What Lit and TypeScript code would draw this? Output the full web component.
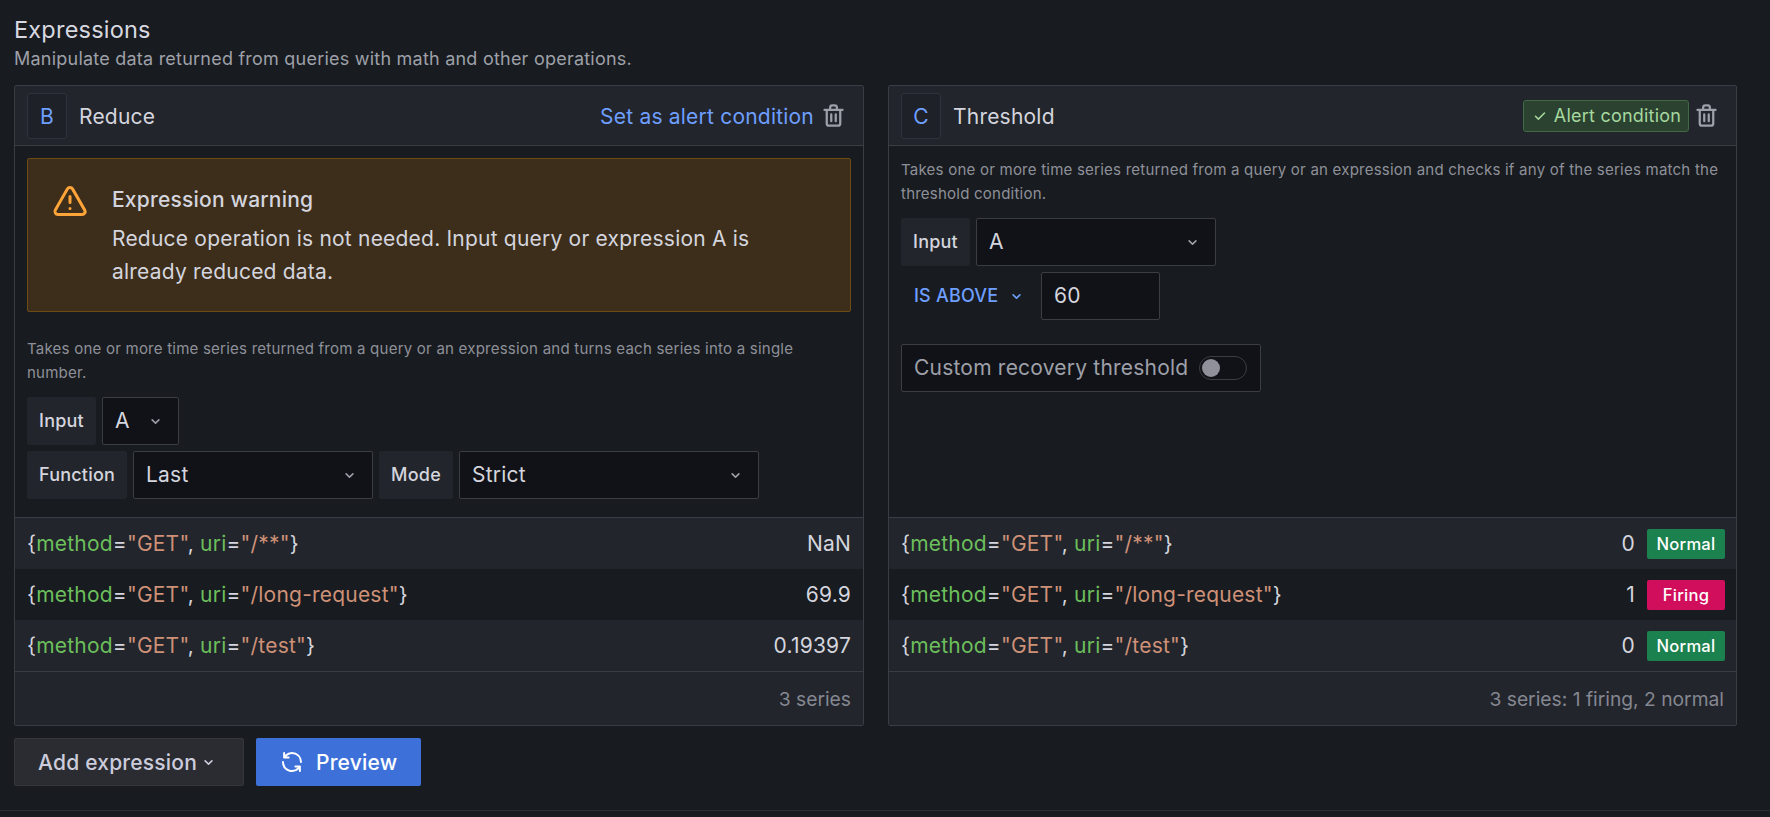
import { LitElement, html, css, svg } from "lit";
import { customElement } from "lit/decorators.js";

const P = {
  trash: "M10,18a1,1,0,0,0,1-1V11a1,1,0,0,0-2,0v6A1,1,0,0,0,10,18ZM20,6H16V5a3,3,0,0,0-3-3H11A3,3,0,0,0,8,5V6H4A1,1,0,0,0,4,8H5V19a3,3,0,0,0,3,3h8a3,3,0,0,0,3-3V8h1a1,1,0,0,0,0-2ZM10,5a1,1,0,0,1,1-1h2a1,1,0,0,1,1,1V6H10Zm7,14a1,1,0,0,1-1,1H8a1,1,0,0,1-1-1V8H17Zm-3-1a1,1,0,0,0,1-1V11a1,1,0,0,0-2,0v6A1,1,0,0,0,14,18Z",
  warn: "M12,16a1,1,0,1,0,1,1A1,1,0,0,0,12,16Zm10.67,1.47-8.05-14a3,3,0,0,0-5.24,0l-8,14A3,3,0,0,0,3.94,22H20.06a3,3,0,0,0,2.61-4.53Zm-1.73,2a1,1,0,0,1-.88.51H3.94a1,1,0,0,1-.88-.51,1,1,0,0,1,0-1l8-14a1,1,0,0,1,1.78,0l8.05,14A1,1,0,0,1,20.94,19.49ZM12,8a1,1,0,0,0-1,1v4a1,1,0,0,0,2,0V9A1,1,0,0,0,12,8Z",
  sync: "M19.91,15.51H15.38a1,1,0,0,0,0,2h2.4A8,8,0,0,1,4,12a1,1,0,0,0-2,0,10,10,0,0,0,16.88,7.23V21a1,1,0,0,0,2,0V16.5A1,1,0,0,0,19.91,15.51ZM12,2A10,10,0,0,0,5.12,4.77V3a1,1,0,0,0-2,0V7.5a1,1,0,0,0,1,1h4.5a1,1,0,0,0,0-2H6.22A8,8,0,0,1,20,12a1,1,0,0,0,2,0A10,10,0,0,0,12,2Z",
  down: "M17,9.17a1,1,0,0,0-1.41,0L12,12.71,8.46,9.17a1,1,0,0,0-1.41,0,1,1,0,0,0,0,1.42l4.24,4.24a1,1,0,0,0,1.42,0L17,10.59A1,1,0,0,0,17,9.17Z",
  check: "M18.71,7.21a1,1,0,0,0-1.42,0L9.84,14.67,6.71,11.53A1,1,0,1,0,5.29,13l3.84,3.84a1,1,0,0,0,1.42,0l8.16-8.16A1,1,0,0,0,18.71,7.21Z",
};
const icon = (name: keyof typeof P, cls = "") =>
  html`<svg class="icon ${cls}" viewBox="0 0 24 24" fill="currentColor">${svg`<path d=${P[name]}></path>`}</svg>`;

const labels = (uri: string) => html`<span>{<span class="k">method</span>=<span class="v">"GET"</span>, <span class="k">uri</span>=<span class="v">"${uri}"</span>}</span>`;

@customElement("app-root")
export class AppRoot extends LitElement {
  static styles = css`
    :host { display: block; height: 817px; background: #181b1f; color: #ccccdc; font-family: Inter, "Noto Sans", sans-serif; font-size: 21px; letter-spacing: .01em; overflow: hidden; box-sizing: border-box; padding: 14px 33px 0 14px; }
    * { box-sizing: border-box; }
    .icon { display: block; flex: none; }
    .title { font-size: 23.5px; line-height: 32px; font-weight: 400; color: #d8d9e0; }
    .sub { font-size: 18px; letter-spacing: .0125em; line-height: 24px; color: #9ea0a9; margin-top: 1px; height: 30px; }
    .grid { display: grid; grid-template-columns: 850px 849px; gap: 24px; margin-top: 8px; }
    .panel { border: 1px solid #3a3d44; border-radius: 2px; display: flex; flex-direction: column; height: 641px; background: #181b1f; }
    .head { height: 60px; flex: none; background: #22252b; border-bottom: 1px solid #3a3d44; display: flex; align-items: center; padding: 0 12px; }
    .ref { width: 40px; height: 46px; border: 1px solid #2f323a; border-radius: 3px; background: #1e2127; color: #6e9fff; display: flex; align-items: center; justify-content: center; padding-top: 1px; }
    .name { margin-left: 12px; color: #d4d5de; flex: 1; padding-top: 2px; }
    .set { color: #6e9fff; margin-right: 1px; padding-top: 2px; }
    .trash { width: 27px; height: 27px; color: #9ea0a9; }
    .head .trash { margin: 0 4px 0 5px; }
    .ok { height: 32px; width: 166px; display: flex; align-items: center; justify-content: center; gap: 5px; background: #2b4231; border: 1px solid #3f6a44; border-radius: 3px; color: #a6d89f; font-size: 18px; letter-spacing: .012em; }
    .ok .icon { width: 18px; height: 18px; }
    .ok ~ .trash { margin-left: 4px; }
    .body { flex: 1; padding: 12px 12px 0; }
    .alert { height: 154px; background: #3d2e1b; border: 1px solid #6c4b15; border-radius: 2px; display: flex; padding: 29px 24px 0 24px; }
    .alert .icon { width: 36px; height: 36px; color: #ffa439; margin-top: -5px; }
    .alert-text { margin-left: 24px; width: 690px; }
    .alert-title { font-weight: 500; line-height: 24px; color: #d4d5de; }
    .alert-msg { line-height: 33px; margin-top: 10px; color: #d4d5de; }
    .desc { font-size: 15.05px; line-height: 24px; color: #8e9099; }
    .desc.first { margin-top: 25px; }
    .row { display: flex; gap: 6px; margin-top: 12px; height: 48px; }
    .row + .row { margin-top: 6px; }
    .lab { height: 48px; display: flex; align-items: center; justify-content: center; background: #22252b; border-radius: 2px; font-size: 18px; font-weight: 500; color: #d4d5de; padding-bottom: 2px; }
    .sel { height: 48px; display: flex; align-items: center; background: #111217; border: 1px solid #3a3d44; border-radius: 2px; padding: 0 13px 2px 12px; color: #d4d5de; justify-content: space-between; }
    .sel .icon { width: 19px; height: 19px; color: #9ea0a9; margin-top: 2px; }
    .op { width: 134px; display: flex; align-items: center; color: #6e9fff; font-size: 18px; font-weight: 500; padding: 0 0 2px 13px; gap: 9px; }
    .op .icon { width: 19px; height: 19px; margin-top: 2px; }
    .rec { margin-top: 24px; width: 360px; height: 48px; background: #111217; border: 1px solid #3a3d44; border-radius: 2px; display: flex; align-items: center; padding: 0 0 2px 12px; color: #9ea0a9; }
    .sw { width: 48px; height: 24px; border: 1px solid #3a3d44; border-radius: 12px; margin: 2px 0 0 11px; padding: 2px 2px; flex: none; }
    .sw i { display: block; width: 18px; height: 18px; border-radius: 50%; background: #8f9099; }
    .tr { height: 51px; display: flex; align-items: center; justify-content: space-between; padding: 0 12px; color: #d4d5de; background: #181b1f; }
    .tbl { border-top: 1px solid #3a3d44; }
    .tr.alt { background: #22252b; }
    .k { color: #6cbf5c; }
    .v { color: #ce9178; }
    .end { display: flex; align-items: center; gap: 12px; }
    .badge { width: 78px; height: 30px; margin-right: -1px; border-radius: 2px; display: flex; align-items: center; justify-content: center; color: #fff; font-size: 16.6px; font-weight: 500; }
    .normal { background: #1b814e; }
    .firing { background: #d10e5c; }
    .foot { height: 54px; flex: none; background: #22252b; border-top: 1px solid #3a3d44; display: flex; align-items: center; justify-content: flex-end; padding: 0 12px; color: #858791; font-size: 19.25px; letter-spacing: 0; }
    .btns { display: flex; gap: 12px; margin-top: 12px; }
    .btn { height: 48px; display: flex; align-items: center; border-radius: 2px; font-weight: 500; }
    .add { width: 230px; background: #2a2c32; border: 1px solid #35373d; color: #ccccdc; padding-left: 23px; gap: 2px; }
    .add .icon { width: 19px; height: 19px; }
    .prev { width: 165px; background: #3d71d9; color: #fff; padding-left: 24px; gap: 12px; }
    .prev .icon { width: 24px; height: 24px; }
    .rule { border-top: 1px solid #2c2f36; margin: 24px -33px 0 -14px; }
  `;

  private table(rows: [string, string, string?][], foot: string) {
    return html`<div class="tbl">
        ${rows.map(([u, val, st], i) => html`<div class="tr ${i % 2 === 0 ? "alt" : ""}">
          ${labels(u)}
          <span class="end"><span>${val}</span>${st ? html`<span class="badge ${st.toLowerCase()}">${st}</span>` : ""}</span>
        </div>`)}
      </div>
      <div class="foot">${foot}</div>`;
  }

  render() {
    return html`
      <div class="title">Expressions</div>
      <div class="sub">Manipulate data returned from queries with math and other operations.</div>
      <div class="grid">
        <section class="panel">
          <div class="head">
            <div class="ref">B</div><div class="name">Reduce</div>
            <span class="set">Set as alert condition</span>${icon("trash", "trash")}
          </div>
          <div class="body">
            <div class="alert">
              ${icon("warn")}
              <div class="alert-text">
                <div class="alert-title">Expression warning</div>
                <div class="alert-msg">Reduce operation is not needed. Input query or expression A is already reduced data.</div>
              </div>
            </div>
            <div class="desc first">Takes one or more time series returned from a query or an expression and turns each series into a single number.</div>
            <div class="row">
              <div class="lab" style="width:69px">Input</div>
              <div class="sel" style="width:77px">A ${icon("down")}</div>
            </div>
            <div class="row">
              <div class="lab" style="width:100px">Function</div>
              <div class="sel" style="width:240px">Last ${icon("down")}</div>
              <div class="lab" style="width:74px">Mode</div>
              <div class="sel" style="width:300px">Strict ${icon("down")}</div>
            </div>
          </div>
          ${this.table([['/**', 'NaN'], ['/long-request', '69.9'], ['/test', '0.19397']], "3 series")}
        </section>
        <section class="panel">
          <div class="head">
            <div class="ref">C</div><div class="name">Threshold</div>
            <span class="ok">${icon("check")}Alert condition</span>${icon("trash", "trash")}
          </div>
          <div class="body">
            <div class="desc">Takes one or more time series returned from a query or an expression and checks if any of the series match the threshold condition.</div>
            <div class="row">
              <div class="lab" style="width:69px">Input</div>
              <div class="sel" style="width:240px">A ${icon("down")}</div>
            </div>
            <div class="row">
              <div class="op">IS ABOVE ${icon("down")}</div>
              <div class="sel" style="width:119px">60</div>
            </div>
            <div class="rec">Custom recovery threshold<div class="sw"><i></i></div></div>
          </div>
          ${this.table([['/**', '0', 'Normal'], ['/long-request', '1', 'Firing'], ['/test', '0', 'Normal']], "3 series: 1 firing, 2 normal")}
        </section>
      </div>
      <div class="btns">
        <div class="btn add">Add expression ${icon("down")}</div>
        <div class="btn prev">${icon("sync")}Preview</div>
      </div>
      <div class="rule"></div>
    `;
  }
}
